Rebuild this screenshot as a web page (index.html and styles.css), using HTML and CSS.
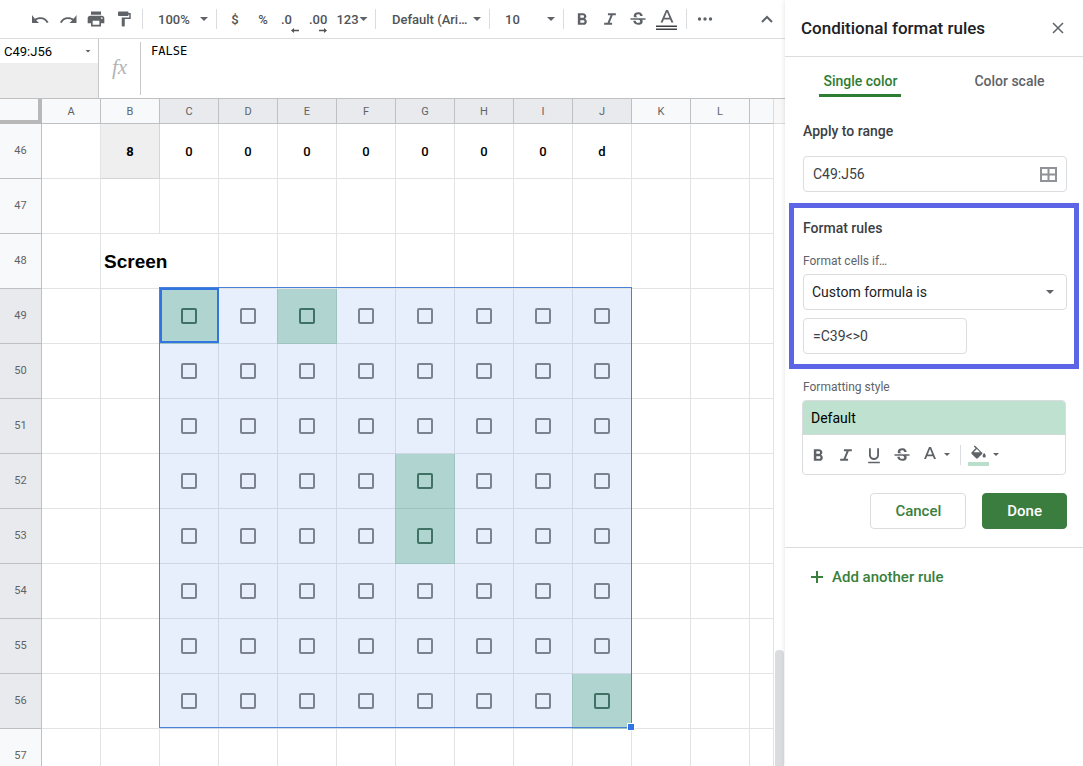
FILE: index.html
```html
<!DOCTYPE html>
<html lang="en">
<head>
<meta charset="utf-8">
<title>Conditional format rules</title>
<link rel="stylesheet" href="styles.css">
</head>
<body>
<div class="app">
  <main class="workspace">
    <div class="toolbar">
      <button class="tool" aria-label="Undo"><svg class="icon" viewBox="0 0 20 20"><path d="M2 6v8h7L6.200 11.300c1.200-.8 2.700-1.200 4.300-1.200 2.800 0 5 1.500 6.200 3.900l1.900-.8c-1.600-3.100-4.600-5-8.100-5-2.100 0-4.100.6-5.700 1.600z"/></svg></button>
      <button class="tool" aria-label="Redo"><svg class="icon" viewBox="0 0 20 20"><path d="M18.500 6v8h-7l2.800-2.700c-1.200-.8-2.700-1.200-4.300-1.200-2.800 0-5 1.500-6.200 3.900l-1.900-.8c1.600-3.100 4.600-5 8.100-5 2.100 0 4.100.6 5.700 1.600z"/></svg></button>
      <button class="tool" aria-label="Print"><svg class="icon" viewBox="0 0 24 24"><path d="M19 8H5c-1.66 0-3 1.34-3 3v6h4v4h12v-4h4v-6c0-1.66-1.34-3-3-3zm-3 11H8v-5h8v5zm3-7c-.55 0-1-.45-1-1s.45-1 1-1 1 .45 1 1-.45 1-1 1zm-1-9H6v4h12V3z"/></svg></button>
      <button class="tool" aria-label="Paint format"><svg class="icon icon-small" viewBox="0 0 24 24"><path d="M18 4V3c0-.55-.45-1-1-1H5c-.55 0-1 .45-1 1v4c0 .55.45 1 1 1h12c.55 0 1-.45 1-1V6h1v4H9v11c0 .55.45 1 1 1h2c.55 0 1-.45 1-1v-9h8V4h-3z"/></svg></button>
      <span class="separator"></span>
      <span class="picker picker-short"><select class="picker-select" aria-label="Zoom"><option>100%</option></select><span class="caret"></span></span>
      <span class="separator"></span>
      <button class="tool" aria-label="Format as currency">$</button>
      <button class="tool" aria-label="Format as percent">%</button>
      <button class="tool decimal" aria-label="Decrease decimal places">.0<svg class="decimal-arrow" viewBox="0 0 8 5"><path d="M0 2.500 3 0v1.700h5v1.600H3V5z"/></svg></button>
      <button class="tool decimal" aria-label="Increase decimal places">.00<svg class="decimal-arrow" viewBox="0 0 8 5"><path d="M8 2.500 5 0v1.700H0v1.600h5V5z"/></svg></button>
      <button class="tool tool-formats">123<span class="caret"></span></button>
      <span class="separator"></span>
      <span class="picker picker-font"><select class="picker-select" aria-label="Font"><option>Default (Ari…</option></select><span class="caret"></span></span>
      <span class="separator"></span>
      <span class="picker picker-short"><select class="picker-select" aria-label="Font size"><option>10</option></select><span class="caret"></span></span>
      <span class="separator"></span>
      <button class="tool" aria-label="Bold"><svg class="icon" viewBox="0 0 24 24"><path d="M15.6 11.790c.97-.67 1.650-1.770 1.650-2.790 0-2.260-1.750-4-4-4H7v14h7.040c2.090 0 3.710-1.700 3.710-3.790 0-1.520-.86-2.820-2.150-3.420zM10 7.500h3c.83 0 1.500.67 1.500 1.500s-.67 1.500-1.500 1.500h-3v-3zm3.500 9H10v-3h3.500c.83 0 1.500.67 1.500 1.500s-.67 1.500-1.500 1.500z"/></svg></button>
      <button class="tool" aria-label="Italic"><svg class="icon" viewBox="0 0 24 24"><path d="M9.500 5v2.400h3.200l-3.700 9.200H5V19h9.500v-2.400h-2.900l3.700-9.200H19V5z"/></svg></button>
      <button class="tool" aria-label="Strikethrough"><svg class="icon" viewBox="0 -1 24 24"><path d="M6.850 7.080C6.850 4.370 9.450 3 12.240 3c1.640 0 3 .49 3.900 1.280.77.65 1.460 1.730 1.460 3.240h-3.010c0-.31-.05-.59-.15-.85-.29-.86-1.200-1.280-2.250-1.280-1.860 0-2.340 1.020-2.340 1.700 0 .48.25.88.74 1.210.38.25.77.48 1.410.7H7.390c-.21-.34-.54-.89-.54-1.920zM21 12v-2H3v2h9.620c1.150.45 1.960.75 1.960 1.970 0 1-.81 1.670-2.280 1.670-1.540 0-2.930-.54-2.930-2.510H6.400c0 .55.08 1.130.24 1.580.81 2.290 3.290 3.300 5.670 3.300 2.270 0 5.300-.89 5.300-4.050 0-.3-.01-1.160-.48-1.940H21V12z"/></svg></button>
      <button class="tool tool-color" aria-label="Text color"><svg class="icon icon-color" viewBox="0 0 22 22"><path d="M10 2 4.500 14.500h2.200l1.200-3h6.200l1.200 3h2.200L12 2zm-1.400 7.800L11 4l2.400 5.800z"/><path class="icon-dark" d="M0 17.500h21V19H0zM0 20.500h21V22H0z"/></svg></button>
      <span class="separator"></span>
      <button class="tool" aria-label="More"><svg class="icon" viewBox="0 0 20 20"><circle cx="4.500" cy="10" r="1.700"/><circle cx="10" cy="10" r="1.700"/><circle cx="15.500" cy="10" r="1.700"/></svg></button>
      <button class="tool tool-collapse" aria-label="Hide the menus"><svg class="icon" viewBox="0 0 20 20"><path class="icon-stroke" d="m5 13 5-5 5 5"/></svg></button>
    </div>

    <div class="formula-bar">
      <div class="name-box">
        <input class="name-input" aria-label="Name box" value="C49:J56">
        <button class="name-menu" aria-label="Named ranges"><span class="caret caret-small"></span></button>
      </div>
      <span class="fx">fx</span>
      <textarea class="formula-input" aria-label="Formula" rows="3">FALSE</textarea>
    </div>

    <div class="sheet">
      <div class="grid-view">
        <table class="grid">
          <colgroup><col class="col-number"><col class="col-data" span="12"><col></colgroup>
          <thead><tr id="column-heads"><th class="corner" aria-label="Select all"></th></tr></thead>
          <tbody id="rows"></tbody>
        </table>
      </div>
      <div class="scrollbar"><div class="scroll-track"><div class="scroll-thumb"></div></div></div>
    </div>
  </main>

  <aside class="panel">
    <header class="panel-header">
      <h1 class="panel-title">Conditional format rules</h1>
      <button class="close" aria-label="Close"><svg class="close-icon" viewBox="0 0 12 12"><path d="m1 1 10 10M11 1 1 11"/></svg></button>
    </header>
    <nav class="tabs" role="tablist">
      <button class="tab tab-active" role="tab" aria-selected="true">Single color</button>
      <button class="tab" role="tab" aria-selected="false">Color scale</button>
    </nav>
    <section class="range-section">
      <label class="section-title" for="range">Apply to range</label>
      <div class="range-field">
        <input class="field" id="range" value="C49:J56">
        <button class="range-button" aria-label="Select data range"><svg class="range-icon" viewBox="0 0 17 15"><path d="M1 1h15v13H1zM8.500 1v13M1 7.500h15"/></svg></button>
      </div>
    </section>
    <section class="rules-section">
      <h2 class="section-title">Format rules</h2>
      <label class="caption" for="condition">Format cells if…</label>
      <div class="select-field">
        <select class="field field-select" id="condition"><option>Custom formula is</option></select>
        <span class="caret"></span>
      </div>
      <input class="field field-formula" aria-label="Value or formula" value="=C39&lt;&gt;0">
    </section>
    <section class="style-section">
      <h2 class="caption">Formatting style</h2>
      <div class="style-box">
        <button class="style-preview">Default</button>
        <div class="style-tools">
          <button class="tool" aria-label="Bold"><svg class="icon" viewBox="0 0 24 24"><path d="M15.6 11.790c.97-.67 1.650-1.770 1.650-2.790 0-2.260-1.750-4-4-4H7v14h7.040c2.090 0 3.710-1.700 3.710-3.790 0-1.520-.86-2.820-2.150-3.420zM10 7.500h3c.83 0 1.500.67 1.500 1.500s-.67 1.500-1.500 1.500h-3v-3zm3.500 9H10v-3h3.500c.83 0 1.500.67 1.500 1.500s-.67 1.500-1.500 1.500z"/></svg></button>
          <button class="tool" aria-label="Italic"><svg class="icon" viewBox="0 0 24 24"><path d="M9.500 5v2.400h3.200l-3.700 9.200H5V19h9.500v-2.400h-2.900l3.700-9.200H19V5z"/></svg></button>
          <button class="tool" aria-label="Underline"><svg class="icon" viewBox="0 0 24 24"><path d="M12 18c3.310 0 6-2.690 6-6V4h-2.200v8c0 1.930-1.570 3.700-3.800 3.700S8.200 13.930 8.200 12V4H6v8c0 3.310 2.690 6 6 6zm-7 2v2h14v-2H5z"/></svg></button>
          <button class="tool" aria-label="Strikethrough"><svg class="icon" viewBox="0 -1 24 24"><path d="M6.850 7.080C6.850 4.370 9.450 3 12.240 3c1.640 0 3 .49 3.900 1.280.77.65 1.460 1.730 1.460 3.240h-3.010c0-.31-.05-.59-.15-.85-.29-.86-1.200-1.280-2.250-1.280-1.860 0-2.340 1.020-2.340 1.700 0 .48.25.88.74 1.210.38.25.77.48 1.410.7H7.390c-.21-.34-.54-.89-.54-1.920zM21 12v-2H3v2h9.620c1.150.45 1.960.75 1.960 1.970 0 1-.81 1.670-2.280 1.670-1.540 0-2.930-.54-2.930-2.510H6.400c0 .55.08 1.130.24 1.580.81 2.290 3.290 3.300 5.670 3.300 2.270 0 5.300-.89 5.300-4.050 0-.3-.01-1.160-.48-1.940H21V12z"/></svg></button>
          <button class="tool tool-menu" aria-label="Text color"><svg class="icon icon-color" viewBox="0 0 22 22"><path d="M10 3 5 15h2l1.100-2.800h5.800L15 15h2L12 3zm-1.200 7.500L11 4.900l2.200 5.600z"/></svg><span class="caret caret-small"></span></button>
          <span class="separator"></span>
          <button class="tool tool-menu" aria-label="Fill color"><svg class="icon icon-color" viewBox="0 0 22 22"><path d="M13.400 8 6.900 1.400 5.800 2.500l1.800 1.800-3.900 3.900c-.5.500-.5 1.200 0 1.700l4.400 4.400c.5.500 1.200.5 1.700 0l4.300-4.400c.5-.5.500-1.200-.7-1.900zM5.700 8.300l3.200-3.200 3.200 3.200zM16.200 9s-1.600 1.900-1.600 3a1.600 1.600 0 0 0 3.200 0c0-1.100-1.600-3-1.600-3z"/><path class="icon-mint" d="M0 18h21v4H0z"/></svg><span class="caret caret-small"></span></button>
        </div>
      </div>
      <div class="actions">
        <button class="action action-cancel">Cancel</button>
        <button class="action action-done">Done</button>
      </div>
    </section>
    <button class="add-rule"><svg class="plus-icon" viewBox="0 0 12 12"><path d="M6 0v12M0 6h12"/></svg>Add another rule</button>
  </aside>
</div>
<script src="script.js"></script>
</body>
</html>
```

FILE: styles.css
```css
* {
  box-sizing: border-box;
}

body {
  margin: 0;
  font-family: Roboto, "Liberation Sans", sans-serif;
  font-size: 14px;
  color: #202124;
  background: #fff;
}

button,
input,
select,
textarea {
  margin: 0;
  padding: 0;
  border: 0;
  outline: 0;
  background: none;
  color: inherit;
  font: inherit;
}

select {
  appearance: none;
}

h1,
h2 {
  margin: 0;
}

.app {
  display: grid;
  grid-template-columns: minmax(0, 1fr) 298px;
  height: 100vh;
  overflow: hidden;
}

.workspace {
  display: flex;
  flex-direction: column;
  min-width: 0;
  min-height: 0;
}

/* Toolbar */

.toolbar {
  display: flex;
  align-items: center;
  flex: none;
  height: 39px;
  padding: 0 4px 0 26px;
  border-bottom: 1px solid #dadce0;
  color: #505356;
  font-size: 13px;
  font-weight: 500;
}

.tool {
  display: flex;
  align-items: center;
  justify-content: center;
  flex: none;
  width: 28px;
  height: 28px;
}

.icon {
  flex: none;
  width: 20px;
  height: 20px;
  fill: #5f6368;
}

.icon-small {
  width: 18px;
  height: 18px;
}

.icon-color {
  width: 22px;
  height: 22px;
}

.icon-dark {
  fill: #3c4043;
}

.icon-mint {
  fill: #b9dfcc;
}

.icon-stroke {
  fill: none;
  stroke: #5f6368;
  stroke-width: 2;
}

.separator {
  flex: none;
  width: 1px;
  height: 20px;
  margin: 0 4px;
  background: #dadce0;
}

.caret {
  flex: none;
  width: 8px;
  height: 4px;
  background: #5f6368;
  clip-path: polygon(0 0, 100% 0, 50% 100%);
}

.caret-small {
  width: 6px;
  height: 3px;
}

.picker,
.select-field {
  display: grid;
  align-items: center;
}

.picker > *,
.select-field > * {
  grid-area: 1 / 1;
}

.picker .caret,
.select-field .caret {
  justify-self: end;
  pointer-events: none;
}

.picker {
  flex: none;
  padding: 0 4px 0 11px;
}

.picker-short {
  width: 65px;
}

.picker-font {
  width: 105px;
  padding-left: 12px;
}

.decimal {
  position: relative;
  justify-content: flex-start;
  padding-left: 4px;
}

.decimal-arrow {
  position: absolute;
  right: 6px;
  bottom: 0;
  width: 8px;
  height: 5px;
  fill: #505356;
}

.tool-formats {
  gap: 1px;
  width: 38px;
}

.tool-color {
  width: 30px;
}

.tool-collapse {
  margin-left: auto;
}

/* Formula bar */

.formula-bar {
  display: flex;
  flex: none;
  height: 60px;
  border-bottom: 1px solid #c0c0c0;
}

.name-box {
  display: flex;
  align-items: flex-start;
  width: 99px;
  border-right: 1px solid #c8c8c8;
  background: #eee;
}

.name-input {
  flex: 1;
  min-width: 0;
  height: 24px;
  padding-left: 4px;
  background: #fff;
  color: #000;
  font-size: 13px;
}

.name-menu {
  display: flex;
  align-items: center;
  justify-content: center;
  width: 20px;
  height: 24px;
  background: #fff;
}

.fx {
  width: 42px;
  margin: 3px 0;
  border-right: 1px solid #c8c8c8;
  color: #b4b4b4;
  font: italic 21px/50px "Liberation Serif", serif;
  text-align: center;
}

.formula-input {
  flex: 1;
  padding: 4px 10px;
  color: #000;
  font: 12px/17px "DejaVu Sans Mono", monospace;
  resize: none;
}

/* Sheet */

.sheet {
  display: flex;
  flex: 1;
  min-height: 0;
}

.grid-view {
  flex: 1;
  min-width: 0;
  overflow: hidden;
}

.grid {
  width: 100%;
  border-spacing: 0;
  table-layout: fixed;
}

.col-number {
  width: 42px;
}

.col-data {
  width: 59px;
}

.head,
.corner,
.row-number {
  padding: 0;
  border-right: 1px solid #c0c0c0;
  border-bottom: 1px solid #c0c0c0;
  background: #f8f9fa;
  color: #5f6368;
  font-size: 11px;
  font-weight: 400;
  text-align: center;
}

.row-number {
  padding-bottom: 2px;
}

.head {
  height: 25px;
}

.head-last {
  border-right-color: #dadce0;
}

.corner {
  border-right: 4px solid #b8b8b8;
  border-bottom: 4px solid #b8b8b8;
}

.head-selected {
  background: #e8eaed;
}

.cell {
  position: relative;
  height: 55px;
  padding: 0;
  border-right: 1px solid #e2e3e3;
  border-bottom: 1px solid #e2e3e3;
  color: #000;
  font-size: 13px;
  font-weight: 500;
  text-align: center;
}

.cell-shaded {
  border-color: #d5d5d5;
  background: #efefef;
  font-weight: 700;
}

.cell-title {
  padding: 2px 0 0 3px;
  font: bold 19px "Liberation Sans", Arial, sans-serif;
  text-align: left;
}

.cell-selected {
  border-color: #cfd7e5;
  background: #e8effc;
}

.cell-match {
  border-color: #9dc4c0;
  background: #b0d4cf;
  box-shadow: -1px 0 #9dc4c0;
}

.check {
  display: block;
  width: 16px;
  height: 16px;
  margin: 0 auto;
  border: 2px solid #7c828e;
  border-radius: 2px;
  appearance: none;
}

.cell-match .check {
  border-color: #3f7165;
}

.selection {
  position: absolute;
  z-index: 1;
  top: -2px;
  left: -1px;
  width: 473px;
  height: 441px;
  border: 1px solid #4a80d8;
  pointer-events: none;
}

.selection-active {
  position: absolute;
  top: 0;
  left: 0;
  width: 59px;
  height: 55px;
  border: 2px solid #3274e0;
}

.selection-handle {
  position: absolute;
  right: -4px;
  bottom: -4px;
  width: 8px;
  height: 8px;
  border: 1px solid #fff;
  background: #2f74e4;
}

.scrollbar {
  display: flex;
  flex-direction: column;
  flex: none;
  width: 11px;
}

.scrollbar::before {
  content: "";
  height: 24px;
  border-bottom: 1px solid #dadce0;
  background: #f8f8f8;
}

.scroll-track {
  display: flex;
  align-items: flex-end;
  flex: 1;
  padding: 0 1px;
}

.scroll-thumb {
  width: 100%;
  height: 18%;
  border-radius: 4px 4px 0 0;
  background: #dadce0;
}

/* Side panel */

.panel {
  position: relative;
  background: #fff;
  box-shadow: 0 0 5px rgba(0, 0, 0, 0.12);
}

.panel-header {
  display: flex;
  align-items: center;
  justify-content: space-between;
  height: 57px;
  padding: 0 15px 0 16px;
  border-bottom: 1px solid #dadce0;
}

.panel-title {
  font-size: 17px;
  font-weight: 500;
}

.close {
  display: flex;
  align-items: center;
  justify-content: center;
  width: 20px;
  height: 20px;
}

.close-icon {
  width: 12px;
  height: 12px;
  fill: none;
  stroke: #5f6368;
  stroke-width: 1.500;
}

.tabs {
  display: flex;
  justify-content: space-around;
  height: 40px;
}

.tab {
  padding: 11px 4px 0;
  border-bottom: 3px solid transparent;
  color: #5f6368;
  font-weight: 500;
}

.tab-active {
  border-bottom-color: #2f7d32;
  border-radius: 3px 3px 0 0;
  color: #2f7d32;
}

.section-title {
  display: block;
  color: #3c4043;
  font-size: 14px;
  font-weight: 500;
  line-height: 20px;
}

.caption {
  display: block;
  color: #5f6368;
  font-size: 12px;
  font-weight: 400;
  line-height: 16px;
}

.field {
  width: 100%;
  height: 36px;
  padding: 0 9px;
  border: 1px solid #dadce0;
  border-radius: 4px;
  color: #3c4043;
}

.range-section {
  padding: 24px 16px 0 18px;
}

.range-field {
  display: grid;
  align-items: center;
  margin-top: 15px;
}

.range-field > * {
  grid-area: 1 / 1;
}

.range-button {
  display: flex;
  justify-self: end;
  margin-right: 10px;
}

.range-icon {
  width: 17px;
  height: 15px;
  fill: none;
  stroke: #8f9296;
  stroke-width: 2;
}

.rules-section {
  margin: 11px 4px 0;
  padding: 10px 7px 10px 9px;
  border: 5px solid #5c65e6;
}

.rules-section .caption {
  margin-top: 15px;
}

.select-field {
  margin: 5px 0 8px;
}

.select-field .caret {
  margin-right: 13px;
}

.field-select {
  padding: 0 8px;
  color: #202124;
}

.field-formula {
  display: block;
  width: 164px;
}

.style-section {
  padding: 10px 16px 18px 18px;
  border-bottom: 1px solid #dadce0;
}

.style-box {
  margin: 5px 1px 0 -1px;
  border: 1px solid #dadce0;
  border-radius: 4px;
  overflow: hidden;
}

.style-preview {
  display: block;
  width: 100%;
  height: 34px;
  padding: 0 8px;
  border-bottom: 1px solid #d0dcd5;
  background: #bfe1cf;
  color: #000;
  text-align: left;
}

.style-tools {
  display: flex;
  align-items: center;
  height: 39px;
  padding-left: 1px;
}

.tool-menu {
  gap: 3px;
  width: 40px;
  padding-left: 3px;
  justify-content: flex-start;
}

.actions {
  display: flex;
  justify-content: flex-end;
  gap: 16px;
  margin-top: 18px;
}

.action {
  height: 36px;
  padding: 0 24px;
  border: 1px solid #dadce0;
  border-radius: 4px;
  color: #39803c;
  font-size: 15px;
  font-weight: 500;
}

.action-done {
  border-color: #3b7d3e;
  background: #3b7d3e;
  color: #fff;
}

.add-rule {
  display: flex;
  align-items: center;
  gap: 9px;
  margin: 19px 0 0 26px;
  color: #39803c;
  font-size: 15px;
  font-weight: 500;
  line-height: 20px;
}

.plus-icon {
  width: 12px;
  height: 12px;
  fill: none;
  stroke: #39803c;
  stroke-width: 2;
}
```

FILE: script.js
```js
const columns = "ABCDEFGHIJKL".split("");
const firstRow = 46;
const lastRow = 57;
const values = {
  B46: "8", C46: "0", D46: "0", E46: "0", F46: "0",
  G46: "0", H46: "0", I46: "0", J46: "d"
};
const matches = ["C49", "E49", "G52", "G53", "J56"];

const isSelectedColumn = (column) => column >= "C" && column <= "J";
const isSelectedRow = (row) => row >= 49 && row <= 56;

function add(parent, tag, className, text) {
  const element = document.createElement(tag);
  element.className = className;
  if (text) element.textContent = text;
  parent.append(element);
  return element;
}

const heads = document.getElementById("column-heads");
columns.forEach((column) => {
  add(heads, "th", isSelectedColumn(column) ? "head head-selected" : "head", column);
});
add(heads, "th", "head head-last");

const body = document.getElementById("rows");
for (let row = firstRow; row <= lastRow; row++) {
  const line = add(body, "tr", "row");
  add(line, "th", isSelectedRow(row) ? "row-number head-selected" : "row-number", String(row));

  [...columns, ""].forEach((column) => {
    const name = column + row;
    // The title in B48 runs on into C48.
    if (name === "C48") return;
    const cell = add(line, "td", "cell", values[name]);
    if (name === "B46") cell.classList.add("cell-shaded");
    if (name === "B48") {
      cell.classList.add("cell-title");
      cell.colSpan = 2;
      cell.textContent = "Screen";
    }
    if (isSelectedColumn(column) && isSelectedRow(row)) {
      cell.classList.add("cell-selected");
      if (matches.includes(name)) cell.classList.add("cell-match");
      const check = add(cell, "input", "check");
      check.type = "checkbox";
      check.setAttribute("aria-label", name);
    }
    if (name === "C49") {
      const selection = add(cell, "div", "selection");
      add(selection, "div", "selection-active");
      add(selection, "div", "selection-handle");
    }
  });
}
```
